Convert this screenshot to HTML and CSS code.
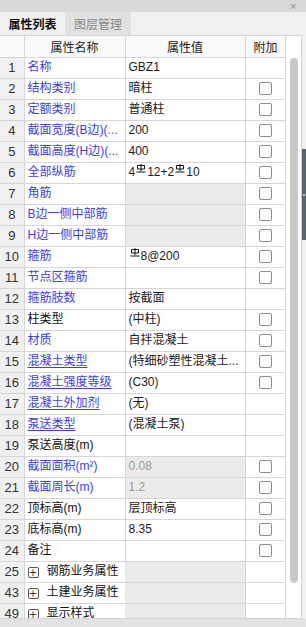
FILE: index.html
```html
<!DOCTYPE html>
<html lang="zh">

<head>
    <title>属性列表</title>
    <meta charset="utf-8">
    <link rel="stylesheet" href="styles.css">
</head>

<body>
    <div class="topbar"><span class="close">×</span></div>
    <div class="tabs">
        <div class="tab active">属性列表</div>
        <div class="tab">图层管理</div>
    </div>
    <div class="main">
        <div class="grid">
            <div class="table-wrap">
                <table class="props">
                    <colgroup>
                        <col class="c-num">
                        <col class="c-name">
                        <col class="c-val">
                        <col class="c-ext">
                    </colgroup>
                    <tr class="head">
                        <td></td>
                        <td>属性名称</td>
                        <td>属性值</td>
                        <td>附加</td>
                    </tr>
                    <tr><td class="num">1</td><td class="name link">名称</td><td class="val">GBZ1</td><td class="ext"></td></tr>
                    <tr><td class="num">2</td><td class="name link">结构类别</td><td class="val">暗柱</td><td class="ext"><span class="cb"></span></td></tr>
                    <tr><td class="num">3</td><td class="name link">定额类别</td><td class="val">普通柱</td><td class="ext"><span class="cb"></span></td></tr>
                    <tr><td class="num">4</td><td class="name link">截面宽度(B边)(...</td><td class="val">200</td><td class="ext"><span class="cb"></span></td></tr>
                    <tr><td class="num">5</td><td class="name link">截面高度(H边)(...</td><td class="val">400</td><td class="ext"><span class="cb"></span></td></tr>
                    <tr>
                        <td class="num">6</td><td class="name link">全部纵筋</td>
                        <td class="val">4<svg class="rb" viewBox="0 0 10 9"><path d="M5 0V7M1.5 1.5H8.5V5H1.5ZM0.5 8H9.5"/></svg>12+2<svg class="rb" viewBox="0 0 10 9"><path d="M5 0V7M1.5 1.5H8.5V5H1.5ZM0.5 8H9.5"/></svg>10</td>
                        <td class="ext"><span class="cb"></span></td>
                    </tr>
                    <tr><td class="num">7</td><td class="name link">角筋</td><td class="val off"></td><td class="ext"><span class="cb"></span></td></tr>
                    <tr><td class="num">8</td><td class="name link">B边一侧中部筋</td><td class="val off"></td><td class="ext"><span class="cb"></span></td></tr>
                    <tr><td class="num">9</td><td class="name link">H边一侧中部筋</td><td class="val off"></td><td class="ext"><span class="cb"></span></td></tr>
                    <tr>
                        <td class="num">10</td><td class="name link">箍筋</td>
                        <td class="val"><svg class="rb" viewBox="0 0 10 9"><path d="M5 0V7M1.5 1.5H8.5V5H1.5ZM0.5 8H9.5"/></svg>8@200</td>
                        <td class="ext"><span class="cb"></span></td>
                    </tr>
                    <tr><td class="num">11</td><td class="name link">节点区箍筋</td><td class="val"></td><td class="ext"><span class="cb"></span></td></tr>
                    <tr><td class="num">12</td><td class="name link">箍筋肢数</td><td class="val">按截面</td><td class="ext"></td></tr>
                    <tr><td class="num">13</td><td class="name">柱类型</td><td class="val">(中柱)</td><td class="ext"><span class="cb"></span></td></tr>
                    <tr><td class="num">14</td><td class="name link">材质</td><td class="val">自拌混凝土</td><td class="ext"><span class="cb"></span></td></tr>
                    <tr><td class="num">15</td><td class="name link"><u>混凝土类型</u></td><td class="val">(特细砂塑性混凝土...</td><td class="ext"><span class="cb"></span></td></tr>
                    <tr><td class="num">16</td><td class="name link"><u>混凝土强度等级</u></td><td class="val">(C30)</td><td class="ext"><span class="cb"></span></td></tr>
                    <tr><td class="num">17</td><td class="name link"><u>混凝土外加剂</u></td><td class="val">(无)</td><td class="ext"></td></tr>
                    <tr><td class="num">18</td><td class="name link"><u>泵送类型</u></td><td class="val">(混凝土泵)</td><td class="ext"></td></tr>
                    <tr><td class="num">19</td><td class="name">泵送高度(m)</td><td class="val"></td><td class="ext"></td></tr>
                    <tr><td class="num">20</td><td class="name link">截面面积(m²)</td><td class="val off">0.08</td><td class="ext"><span class="cb"></span></td></tr>
                    <tr><td class="num">21</td><td class="name link">截面周长(m)</td><td class="val off">1.2</td><td class="ext"><span class="cb"></span></td></tr>
                    <tr><td class="num">22</td><td class="name">顶标高(m)</td><td class="val">层顶标高</td><td class="ext"><span class="cb"></span></td></tr>
                    <tr><td class="num">23</td><td class="name">底标高(m)</td><td class="val">8.35</td><td class="ext"><span class="cb"></span></td></tr>
                    <tr><td class="num">24</td><td class="name">备注</td><td class="val"></td><td class="ext"><span class="cb"></span></td></tr>
                    <tr class="group"><td class="num">25</td><td class="name"><span class="plus">+</span>钢筋业务属性</td><td class="val off"></td><td class="ext"></td></tr>
                    <tr class="group"><td class="num">43</td><td class="name"><span class="plus">+</span>土建业务属性</td><td class="val off"></td><td class="ext"></td></tr>
                    <tr class="group"><td class="num">49</td><td class="name"><span class="plus">+</span>显示样式</td><td class="val off"></td><td class="ext"></td></tr>
                </table>
            </div>
            <div class="vscroll"><div class="thumb"></div></div>
        </div>
        <div class="side"><div class="handle"><span class="dot"></span></div></div>
    </div>
    <div class="bottombar"></div>
</body>

</html>
```

FILE: styles.css
```css
body {
    margin: 0;
    width: 306px;
    height: 627px;
    overflow: hidden;
    background: #f0f0f0;
    font-family: "Liberation Sans", "Noto Sans CJK SC", sans-serif;
    font-size: 12px;
    color: #1a1a1a;
}

.topbar {
    height: 12px;
    background: #d9d9dc;
    display: flex;
    justify-content: flex-end;
    align-items: center;
}

.close {
    font-family: "DejaVu Sans", sans-serif;
    font-size: 9px;
    line-height: 12px;
    color: #8a8a8a;
    margin-right: 9px;
}

.tabs {
    height: 23px;
    display: flex;
    background: #f0f0f0;
}

.tab {
    width: 66px;
    line-height: 23px;
    text-align: center;
    font-family: "Noto Sans CJK SC", sans-serif;
    color: #8a8a8a;
    background: #e1e1e1;
}

.tab.active {
    width: 65px;
    color: #111;
    font-weight: bold;
    background: #f0f0f0;
}

.main {
    display: flex;
    height: 584px;
}

.grid {
    display: flex;
    width: 302px;
    height: 584px;
    border-top: 1px solid #d4d4d4;
    border-bottom: 1px solid #d4d4d4;
    border-right: 1px solid #d4d4d4;
    box-sizing: border-box;
    background: #fff;
}

.table-wrap {
    width: 286px;
    overflow: hidden;
}

.props {
    border-collapse: collapse;
    table-layout: fixed;
    width: 286px;
}

.c-num {
    width: 24px;
}

.c-name {
    width: 101px;
}

.c-val {
    width: 120px;
}

.c-ext {
    width: 41px;
}

.props tr {
    height: 21px;
}

.props td {
    border: 1px solid #d6d6d6;
    padding: 0 0 0 3px;
    white-space: nowrap;
    overflow: hidden;
    line-height: 19px;
}

.props tr:first-child td {
    border-top: none;
}

.props td:first-child {
    border-left: none;
}

.head td {
    background: #f9f9f9;
    text-align: center;
    padding: 0;
    font-family: "Noto Sans CJK SC", sans-serif;
    color: #222;
}

.num {
    background: #f0f0f0;
    text-align: center;
    font-size: 13px;
    color: #333;
}

.props td.num {
    padding: 0;
}

.name {
    color: #111;
}

.name.link {
    color: #3a40ee;
}

.name u {
    text-decoration-color: #3a40ee;
    text-underline-offset: 2px;
}

.val.off {
    background: #ebebeb;
    color: #9a9a9a;
}

.props td.ext {
    padding: 0;
}

.cb {
    display: block;
    width: 11px;
    height: 11px;
    margin: 0 auto;
    border: 1px solid #8c8c8c;
    border-radius: 2px;
    background: #fff;
}

.rb {
    width: 10px;
    height: 9px;
    margin: 0 1px;
    vertical-align: 3px;
    fill: none;
    stroke: #111;
    stroke-width: 1;
}

.group .name {
    border-right: none;
    color: #111;
}

.group .val {
    border-left: none;
}

.plus {
    display: inline-block;
    width: 9px;
    height: 9px;
    margin-right: 8px;
    border: 1px solid #555;
    border-radius: 2px;
    font-family: "DejaVu Sans", sans-serif;
    font-size: 10px;
    line-height: 9px;
    text-align: center;
    vertical-align: -1px;
    color: #333;
}

.vscroll {
    width: 15px;
    border-left: 1px solid #d6d6d6;
    background: #fff;
}

.thumb {
    width: 8px;
    height: 525px;
    margin: 22px 0 0 4px;
    border-radius: 4px;
    background: #c8c8c8;
}

.side {
    flex: 1;
    background: #f0f0f0;
}

.handle {
    display: flex;
    align-items: center;
    justify-content: center;
    height: 91px;
    margin-top: 114px;
    background: #5c6370;
}

.dot {
    width: 2px;
    height: 2px;
    background: #c0c4cc;
}

.bottombar {
    height: 8px;
    background: #e3e3e3;
}
```
